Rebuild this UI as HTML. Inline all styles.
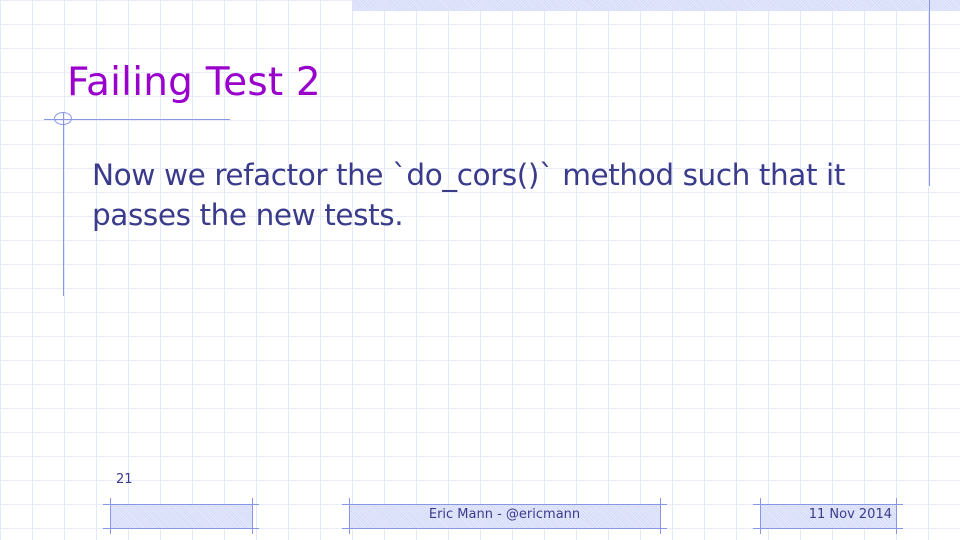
<!DOCTYPE html>
<html><head><style>
body{margin:0;width:960px;height:540px;overflow:hidden;position:relative;font-family:"DejaVu Sans","Liberation Sans",sans-serif;
background-color:#fff;
background-image:linear-gradient(to right,#e4e8fb 1px,transparent 1px),linear-gradient(to bottom,#e8ecfd 1px,transparent 1px);
background-size:32px 24px;background-position:0 0,0 0;}
.pat{position:absolute;background-color:#d3daf8;background-image:repeating-linear-gradient(45deg,#e6eafc 0 1px,transparent 1px 2px);}
.ln{position:absolute;background:#8896e8;}
.t{position:absolute;white-space:nowrap;}
.ft{position:absolute;font-family:"Comic Sans MS","DejaVu Sans",sans-serif;font-size:13px;color:#3b3b8c;}
</style></head><body>
<div class="pat" style="left:352px;top:0;width:608px;height:11px"></div>
<div class="ln" style="left:929px;top:0;width:1px;height:186px"></div>
<div class="t" style="left:67px;top:60px;font-size:39px;color:#9900cc;letter-spacing:0.2px">Failing Test 2</div>
<div class="ln" style="left:44px;top:119px;width:186px;height:1px"></div>
<div class="ln" style="left:63px;top:112px;width:1px;height:184px"></div>
<div style="position:absolute;left:54px;top:112px;width:18px;height:13px;border:1px solid #8896e8;border-radius:50%;box-sizing:border-box"></div>
<div class="t" style="left:92px;top:155px;font-size:29.5px;color:#3b3b8c;line-height:40px;letter-spacing:-0.42px">Now we refactor the `do_cors()` method such that it<br>passes the new tests.</div>
<div class="t" style="left:116px;top:472px;font-size:13px;color:#3b3b8c">21</div>

<div class="pat" style="left:110px;top:504px;width:142px;height:24px"></div>
<div class="ln" style="left:103px;top:504px;width:156px;height:1px"></div>
<div class="ln" style="left:103px;top:528px;width:156px;height:1px"></div>
<div class="ln" style="left:110px;top:498px;width:1px;height:36px"></div>
<div class="ln" style="left:252px;top:498px;width:1px;height:36px"></div>

<div class="pat" style="left:349px;top:504px;width:311px;height:24px"></div>
<div class="ln" style="left:342px;top:504px;width:325px;height:1px"></div>
<div class="ln" style="left:342px;top:528px;width:325px;height:1px"></div>
<div class="ln" style="left:349px;top:498px;width:1px;height:36px"></div>
<div class="ln" style="left:660px;top:498px;width:1px;height:36px"></div>
<div class="ft" style="left:349px;width:311px;top:507px;text-align:center">Eric Mann - @ericmann</div>

<div class="pat" style="left:760px;top:504px;width:136px;height:24px"></div>
<div class="ln" style="left:753px;top:504px;width:150px;height:1px"></div>
<div class="ln" style="left:753px;top:528px;width:150px;height:1px"></div>
<div class="ln" style="left:760px;top:498px;width:1px;height:36px"></div>
<div class="ln" style="left:896px;top:498px;width:1px;height:36px"></div>
<div class="ft" style="left:760px;width:132px;top:507px;text-align:right">11 Nov 2014</div>
</body></html>
